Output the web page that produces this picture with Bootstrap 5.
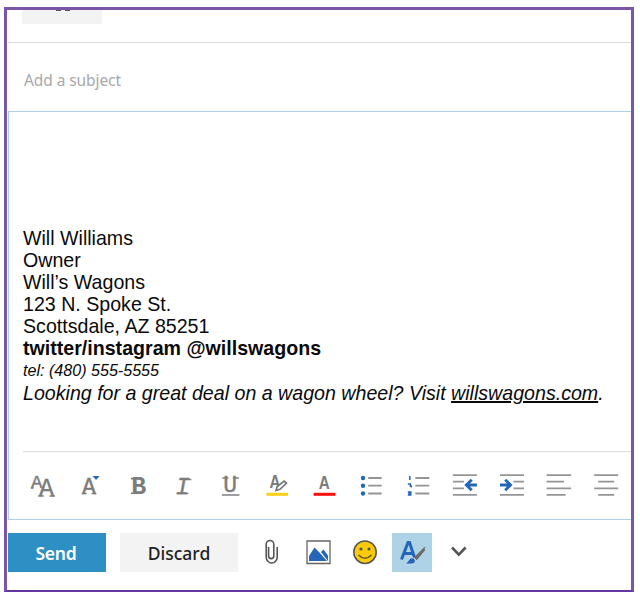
<!DOCTYPE html>
<html lang="en">
<head>
<meta charset="utf-8">
<meta name="viewport" content="width=device-width, initial-scale=1">
<title>New message</title>
<link href="https://cdn.jsdelivr.net/npm/bootstrap@5.3.0/dist/css/bootstrap.min.css" rel="stylesheet">
<style>
body { background:#fff; font-family:"Noto Sans","Open Sans",sans-serif; overflow:hidden; }
.composer { width:630px; height:585px; margin:7px 0 0 4px; border:3px solid #7a56a6; border-bottom:2px solid #6535a0; }
.recipients { height:33px; border-bottom:1px solid #dcdcdc; margin-left:1px; padding-left:14px; }
.chip { width:80px; height:14px; background:#f3f3f3; padding-left:30px; }
.subject { height:68px; margin-left:1px; padding:8px 0 0 16px; }
.subject input { font-size:15.5px; color:#333; letter-spacing:-.08px; width:500px; }
.subject input::placeholder { color:#a8a8a8; opacity:1; }
.editor { margin-left:1px; height:409px; border:1px solid #a9d0e8; border-right:0; }
.message { height:339px; padding:115px 0 0 14px; font-family:"Liberation Sans",Arial,sans-serif; font-size:19.62px; line-height:22px; color:#0a0a0a; white-space:nowrap; }
.phone { font-size:16.1px; line-height:23px; }
.message a { color:inherit; text-decoration-thickness:1.5px; }
.tools { margin-left:14px; border-top:1px solid #dcdcdc; height:68px; padding-top:14px; }
.tools svg { width:46.9px; height:40px; flex:none; }
.tools svg:first-child { margin-left:-3px; }
.tools text { fill:#7c7c7c; font-family:"Liberation Mono",monospace; }
.tools .slab { stroke:#7c7c7c; stroke-width:.4; }
.tools .serif { stroke:#7c7c7c; stroke-width:1.6; fill:none; }
.tools .ln { stroke:#959595; stroke-width:1.8; fill:none; }
.tools .blue { stroke:#2666b8; fill:none; }
.actions { margin:13px 0 0 1px; height:39px; }
.actions .btn { height:39px; border:0; border-radius:0; padding:0; font-size:17.5px; line-height:38px; }
.actions .send { width:98px; background:#2d8fc4; color:#fff; font-weight:600; letter-spacing:-.2px; padding-right:2px; }
.actions .discard { width:118px; margin-left:14px; background:#f3f3f3; color:#222; font-weight:500; letter-spacing:0; }
.actions .glyph { width:40px; }
.actions .active-tool { background:#aed3e6; }
</style>
</head>
<body>
<main class="composer">
  <div class="recipients"><div class="chip overflow-hidden"><svg class="d-block" width="20" height="3" viewBox="0 0 20 3"><path d="M4 .3h5M13 .3h5" stroke="#555" stroke-width="1.4"/></svg></div></div>
  <div class="subject d-flex align-items-center"><input class="form-control-plaintext p-0" type="text" placeholder="Add a subject"></div>
  <section class="editor">
    <div class="message">
      <div>Will Williams</div>
      <div>Owner</div>
      <div>Will’s Wagons</div>
      <div>123 N. Spoke St.</div>
      <div>Scottsdale, AZ 85251</div>
      <div class="fw-bold">twitter/instagram @willswagons</div>
      <div class="phone fst-italic">tel: (480) 555-5555</div>
      <div class="fst-italic">Looking for a great deal on a wagon wheel? Visit <a href="#">willswagons.com</a>.</div>
    </div>
    <div class="tools d-flex" role="toolbar" aria-label="Formatting">
      <svg viewBox="20 466 46.9 40"><text class="slab"><tspan x="31" y="488" font-size="19">A</tspan><tspan x="39" y="496" font-size="25">A</tspan></text><path class="serif" d="M31 488h2.500M38.300 496h5.500M49.500 496h5.500"/></svg>
      <svg viewBox="66.9 466 46.9 40"><text class="slab" x="82" y="494" font-size="23">A</text><path class="serif" d="M81.800 493.500h4.700M91.500 493.500h4.700"/><path d="M92.500 476h7l-3.500 4z" fill="#2666b8"/></svg>
      <svg viewBox="113.8 466 46.9 40"><text x="131" y="494" font-size="25" font-weight="bold">B</text><path class="serif" d="M130.800 478.600h5M130.800 493.300h5"/></svg>
      <svg viewBox="160.7 466 46.9 40"><text class="slab" x="175.500" y="494" font-size="23" font-style="italic">I</text><path class="serif" d="M179.500 479.500h11.500M176.500 493.500h11.500"/></svg>
      <svg viewBox="207.6 466 46.9 40"><text class="slab" x="222.800" y="492" font-size="23" stroke-width="1">U</text><path class="serif" d="M222 478h6M232.500 478h6"/><path class="ln" d="M221.500 495h17.500"/></svg>
      <svg viewBox="254.5 466 46.9 40"><text x="270" y="488.500" font-size="18" font-weight="bold" style="font-family:'Liberation Sans',sans-serif" textLength="11" lengthAdjust="spacingAndGlyphs">A</text><path d="M276.500 490.500l1.200-4 7-5.500 2.300 2-6.500 6.300z" fill="#fff" stroke="#777" stroke-width="1.700"/><path d="M267 494.300h21.500" stroke="#fdd017" stroke-width="3"/></svg>
      <svg viewBox="301.4 466 46.9 40"><text x="319.200" y="489" font-size="18" font-weight="bold" style="font-family:'Liberation Sans',sans-serif" textLength="11" lengthAdjust="spacingAndGlyphs">A</text><path d="M314 494.300h21.800" stroke="#fb0d0d" stroke-width="3"/></svg>
      <svg viewBox="348.3 466 46.9 40"><path class="ln" d="M368.500 478h13.500M368.500 485.700h13.500M368.500 493.500h13.500"/><g fill="#2666b8"><circle cx="363.300" cy="478" r="2.200"/><circle cx="363.300" cy="485.700" r="2.200"/><circle cx="363.300" cy="493.500" r="2.200"/></g></svg>
      <svg viewBox="395.2 466 46.9 40"><path class="ln" d="M415.500 478h14M415.500 485.700h14M415.500 493.500h14"/><path class="blue" stroke-width="1.500" d="M410 476v4M408 484h2.500v2h1v1.500M408 492h3v3h-3M408.500 493.500h3"/></svg>
      <svg viewBox="442.1 466 46.9 40"><path class="ln" d="M453 475.200h24M453 481.700h11M453 488.300h11M453 494.800h24"/><path class="blue" stroke-width="2.900" d="M477 485h-10.500M471.800 479.800l-5.300 5.200 5.300 5.200"/></svg>
      <svg viewBox="489 466 46.9 40"><path class="ln" d="M500 475.200h24M513.500 481.700h10.500M513.500 488.300h10.500M500 494.800h24"/><path class="blue" stroke-width="2.900" d="M500 485h10.500M505.200 479.800l5.300 5.200-5.300 5.200"/></svg>
      <svg viewBox="535.9 466 46.9 40"><path class="ln" d="M546.500 475.200h24.500M546.500 481.700h17.500M546.500 488.300h24.500M546.500 494.800h19"/></svg>
      <svg viewBox="582.8 466 46.9 40"><path class="ln" d="M594 475.200h24M598 481.700h16M594 488.300h24M598 494.800h16"/></svg>
    </div>
  </section>
  <div class="actions d-flex">
    <button class="btn send" type="button">Send</button>
    <button class="btn discard" type="button">Discard</button>
    <svg width="60" height="39" viewBox="238 533 60 39" fill="none" stroke="#555" stroke-width="1.600"><path d="M268.600 547v9a2.600 2.600 0 0 0 5.200 0v-11.500a3.800 4 0 0 0-7.600 0v12.500a5.500 6 0 0 0 11 0v-10"/></svg>
    <svg width="45" height="39" viewBox="298 533 45 39"><path d="M307 541h23v22.500h-23z" fill="#fff" stroke="#666" stroke-width="1.300"/><path d="M309 561v-5l5.500-8.500 4.500 4.500 8 9z" fill="#2666b8"/><path d="M321 552l2.500-2.500 4.500 6v5.500z" fill="#2666b8"/></svg>
    <svg width="49" height="39" viewBox="343 533 49 39"><circle cx="365" cy="552.200" r="11.200" fill="#fbcb0b" stroke="#555" stroke-width="1.500"/><circle cx="361" cy="549" r="1.600" fill="#555"/><circle cx="369" cy="549" r="1.600" fill="#555"/><path d="M358.500 555q6.500 6.500 13 0" fill="none" stroke="#665c2a" stroke-width="1.600"/></svg>
    <button class="btn glyph active-tool" type="button" aria-label="Formatting"><svg class="d-block" width="40" height="39" viewBox="392 533 40 39"><path d="M401.500 559.500l6.500-17h1.500l5 15M404.500 553.500h8" fill="none" stroke="#2666b8" stroke-width="3"/><path d="M404.500 564q3-1 4.500-4.500 3-3.500 6 0 1.500 4-3.500 4.500z" fill="#2666b8" stroke="#d4e8f3" stroke-width=".7"/><path d="M414 557.500l2.800 2.800 8-9.800v-4z" fill="#6a6a6a"/></svg></button>
    <svg width="60" height="39" viewBox="432 533 60 39" fill="none" stroke="#555" stroke-width="2.600"><path d="M452 547.500l6.800 7.200 6.800-7.200"/></svg>
  </div>
</main>
<script src="https://cdn.jsdelivr.net/npm/bootstrap@5.3.0/dist/js/bootstrap.bundle.min.js"></script>
</body>
</html>
